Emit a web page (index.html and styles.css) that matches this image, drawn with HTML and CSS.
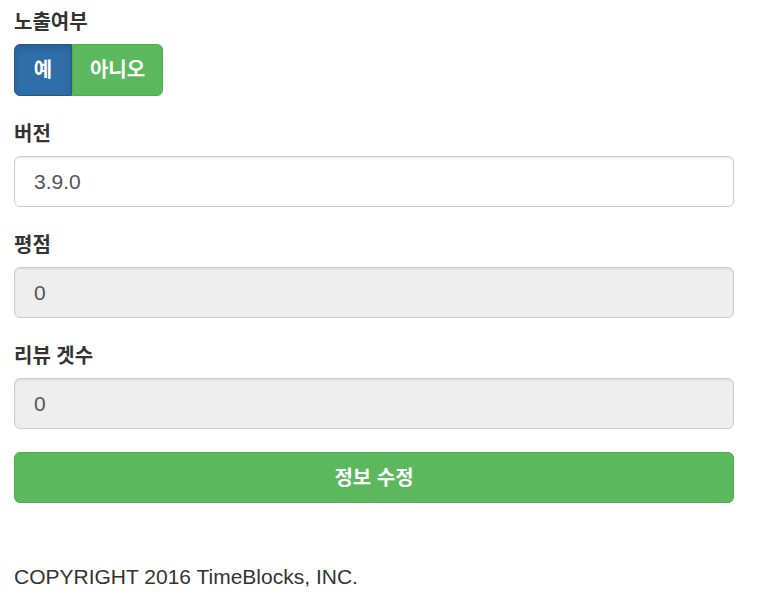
FILE: index.html
```html
<!DOCTYPE html>
<html lang="ko">
<head>
<meta charset="utf-8">
<title>정보 수정</title>
<link rel="stylesheet" href="styles.css">
</head>
<body>
<div class="container">
  <form class="form">
    <div class="form-group">
      <label class="label">노출여부</label>
      <div class="btn-group">
        <button type="button" class="btn btn-primary active">예</button>
        <button type="button" class="btn btn-success">아니오</button>
      </div>
    </div>
    <div class="form-group">
      <label class="label">버전</label>
      <input class="form-control" type="text" value="3.9.0">
    </div>
    <div class="form-group">
      <label class="label">평점</label>
      <input class="form-control" type="text" value="0" disabled>
    </div>
    <div class="form-group">
      <label class="label">리뷰 겟수</label>
      <input class="form-control" type="text" value="0" disabled>
    </div>
    <button type="button" class="btn btn-success btn-block">정보 수정</button>
  </form>
  <footer class="footer">COPYRIGHT 2016 TimeBlocks, INC.</footer>
</div>
</body>
</html>
```
FILE: styles.css
```css
* { box-sizing: border-box; }
html, body { margin: 0; padding: 0; background: #fff; }
body {
  font-family: "Liberation Sans", "Noto Sans CJK KR", sans-serif;
  font-size: 21px;
  line-height: 30px;
  color: #333;
}
.container {
  width: 720px;
  margin-left: 14px;
  padding-top: 6.5px;
}
.form-group { margin-bottom: 22.5px; }
.label {
  display: block;
  font-size: 20px;
  font-weight: 700;
  margin-bottom: 7.5px;
  line-height: 30px;
}
.btn-group { display: flex; }
.btn {
  font-family: inherit;
  font-size: 20px;
  font-weight: 700;
  line-height: 30px;
  height: 52px;
  padding: 10px 18px;
  border: 1px solid transparent;
  border-radius: 6px;
  color: #fff;
  cursor: pointer;
}
.btn-group .btn:first-child { border-top-right-radius: 0; border-bottom-right-radius: 0; width: 58px; padding: 10px 0; }
.btn-group .btn:last-child { border-top-left-radius: 0; border-bottom-left-radius: 0; width: 91px; padding: 10px 0; margin-left: 0; }
.btn-primary { background: #337ab7; border-color: #2e6da4; }
.btn-primary.active {
  background: #2f6ea8;
  border-color: #24578a;
  box-shadow: inset 0 4px 7px rgba(0,0,0,.12);
}
.btn-success { background: #5cb85c; border-color: #4cae4c; }
.btn-block {
  display: block;
  width: 100%;
  height: 51px;
}
.form-control {
  display: block;
  width: 100%;
  height: 51px;
  padding: 9px 19px;
  font-family: inherit;
  font-size: 21px;
  line-height: 30px;
  color: #555;
  background: #fff;
  border: 1.5px solid #ccc;
  border-radius: 6px;
  box-shadow: inset 0 1.5px 1.5px rgba(0,0,0,.075);
}
.form-control:disabled { background: #eee; opacity: 1; -webkit-text-fill-color: #555; }
.footer {
  margin-top: 59px;
  line-height: 30px;
}
```
